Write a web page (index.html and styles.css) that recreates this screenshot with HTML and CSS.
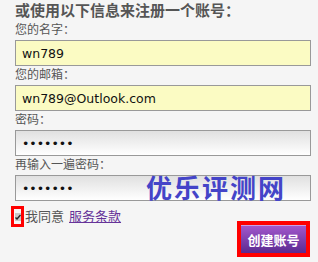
FILE: index.html
```html
<html lang="zh-CN">

<head>
    <meta charset="utf-8" />
    <title>注册账号</title>
    <link rel="stylesheet" href="styles.css">
</head>

<body>
    <div class="register">
        <div class="register-title">或使用以下信息来注册一个账号：</div>
        <div class="field">
            <label class="field-label">您的名字：</label>
            <input class="field-input" type="text" value="wn789" />
        </div>
        <div class="field">
            <label class="field-label">您的邮箱：</label>
            <input class="field-input" type="text" value="wn789@Outlook.com" />
        </div>
        <div class="field">
            <label class="field-label">密码：</label>
            <input class="field-input field-password" type="password" value="1234567" />
        </div>
        <div class="field">
            <label class="field-label">再输入一遍密码：</label>
            <input class="field-input field-password" type="password" value="1234567" />
        </div>
        <div class="agree">
            <span class="agree-mark">
                <span class="agree-box">
                    <svg width="6" height="6" viewBox="0 0 6 6">
                        <path d="M0.5 3.5 L2 5 L5.5 1" fill="none" stroke="#222" stroke-width="1.4" />
                    </svg>
                </span>
            </span>
            <span class="agree-text">我同意</span>
            <a href="#" class="agree-link">服务条款</a>
        </div>
        <div class="actions">
            <button class="create-button">创建账号</button>
        </div>
        <div class="watermark">优乐评测网</div>
    </div>
</body>

</html>
```

FILE: styles.css
```css
body {
    margin: 0;
    background-color: #f5f5f5;
    font-family: "DejaVu Sans", "Noto Sans CJK SC", sans-serif;
    color: #555;
}

.register {
    position: relative;
    padding: 1px 7px 0 15px;
}

.register-title {
    font-size: 15px;
    font-weight: bold;
    line-height: 20px;
    color: #555;
}

.field-label {
    display: block;
    font-size: 12px;
    line-height: 19px;
    color: #555;
}

.field-input {
    display: block;
    width: 100%;
    height: 26px;
    box-sizing: border-box;
    margin: 0;
    padding: 0 6px;
    border: 1px solid #999;
    background-color: #fbfbc3;
    font-family: "DejaVu Sans", sans-serif;
    font-size: 12.5px;
    color: #111;
    outline: none;
}

.field-password {
    background: linear-gradient(#e0e0e0, #ffffff);
}

.agree {
    display: flex;
    align-items: center;
    margin-top: 5px;
    font-size: 13px;
    line-height: 21px;
}

.agree-mark {
    display: flex;
    align-items: center;
    justify-content: center;
    width: 7px;
    height: 15px;
    margin-left: -4px;
    margin-right: 1px;
    border: 3px solid #ff0000;
}

.agree-box {
    display: flex;
    align-items: center;
    justify-content: center;
    width: 6px;
    height: 8px;
    background-color: #c8c8c8;
}

.agree-text {
    color: #555;
}

.agree-link {
    margin-left: 5px;
    color: #663399;
}

.actions {
    display: flex;
    justify-content: flex-end;
    margin-top: -2px;
}

.create-button {
    width: 65px;
    height: 28px;
    margin-right: 5px;
    padding: 0;
    border: none;
    border-top: 1px solid #c9a0e6;
    background: linear-gradient(#a257cc, #5a2a90);
    color: #fff;
    font-family: "Noto Sans CJK SC", sans-serif;
    font-size: 13px;
    font-weight: bold;
    outline: 4px solid #ff0000;
}

.watermark {
    position: absolute;
    left: 146px;
    top: 172px;
    font-family: "Noto Sans CJK SC", sans-serif;
    font-size: 26px;
    font-weight: bold;
    line-height: 30px;
    letter-spacing: 2px;
    color: #4444c8;
}
```
